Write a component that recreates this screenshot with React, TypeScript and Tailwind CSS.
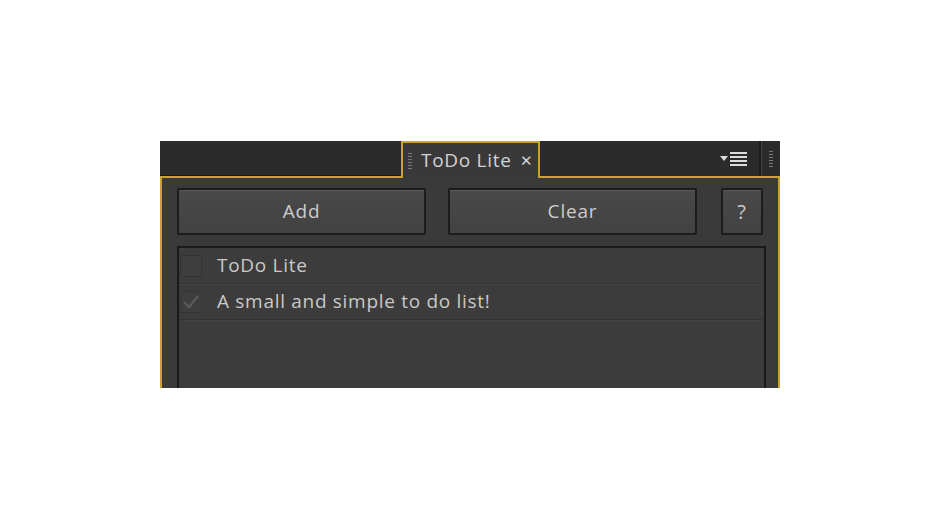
import React from "react";

const font = { fontFamily: '"Open Sans", "Noto Sans", sans-serif' };

function Grip({ className = "" }: { className?: string }) {
  return (
    <div className={`flex flex-col gap-[2px] ${className}`}>
      {Array.from({ length: 6 }).map((_, i) => (
        <div key={i} className="h-[1px] w-[4px] bg-[#7a7a7a]" />
      ))}
    </div>
  );
}

function Btn({ children, className = "" }: { children: React.ReactNode; className?: string }) {
  return (
    <div
      className={`h-[47px] flex items-center justify-center rounded-[2px] border-2 border-[#1c1c1c] bg-gradient-to-b from-[#4a4a4a] to-[#414141] shadow-[inset_0_1px_0_#5a5a5a] text-[19px] tracking-[0.8px] text-[#cccccc] ${className}`}
    >
      {children}
    </div>
  );
}

export default function App() {
  return (
    <div className="min-h-[530px] w-[940px] bg-white pt-[141px] pl-[160px]" style={font}>
      <div className="w-[620px] h-[247px] flex flex-col">
        {/* tab bar */}
        <div className="h-[37px] flex">
          <div className="w-[241px] bg-[#2b2b2b] border-b-2 border-[#c9a233] shadow-[inset_0_-1px_0_#1a1a1a]" />
          <div className="w-[139px] bg-[#393939] border-2 border-b-0 border-[#c9a233] flex items-center pl-[5px]">
            <Grip />
            <span className="ml-[9px] text-[19px] tracking-[0.7px] text-[#d2d2d2] leading-none">ToDo Lite</span>
            <span className="ml-[8px] text-[15px] text-[#d2d2d2] leading-none">✕</span>
          </div>
          <div className="flex-1 bg-[#2b2b2b] border-b-2 border-[#c9a233] flex items-center justify-end">
            <div className="flex items-center mr-[12px]">
              <svg width="8" height="6" viewBox="0 0 8 6" className="mr-[2px]">
                <path d="M0 0 L8 0 L4 5 Z" fill="#dcdcdc" />
              </svg>
              <div className="flex flex-col gap-[2px]">
                <div className="h-[2px] w-[17px] bg-[#dcdcdc]" />
                <div className="h-[2px] w-[17px] bg-[#dcdcdc]" />
                <div className="h-[2px] w-[17px] bg-[#dcdcdc]" />
                <div className="h-[2px] w-[17px] bg-[#dcdcdc]" />
              </div>
            </div>
            <div className="w-[2px] h-full bg-[#1a1a1a] shadow-[1px_0_0_#444]" />
            <div className="w-[19px] flex justify-center">
              <Grip />
            </div>
          </div>
        </div>
        {/* body */}
        <div className="flex-1 bg-[#3a3a3a] border-x-2 border-[#c9a233] pl-[15px] pr-[12px] pt-[10px] flex flex-col">
          <div className="flex">
            <Btn className="w-[249px]">Add</Btn>
            <Btn className="w-[249px] ml-[22px]">Clear</Btn>
            <Btn className="w-[42px] ml-[24px] text-[20px] text-[#c0c0c0]">?</Btn>
          </div>
          <div className="mt-[11px] flex-1 w-[589px] border-2 border-b-0 border-[#1a1a1a] bg-[#3c3c3c] text-[19px] tracking-[0.7px] text-[#c9c9c9]">
            <div className="h-[36px] flex items-center border-b border-[#333333] shadow-[0_1px_0_#424242]">
              <div className="ml-[1px] w-[22px] h-[22px] border border-[#333333] bg-[#3e3e3e]" />
              <span className="ml-[15px] leading-none">ToDo Lite</span>
            </div>
            <div className="h-[36px] flex items-center border-b border-[#333333] shadow-[0_1px_0_#424242]">
              <div className="ml-[1px] w-[22px] h-[22px] border border-[#363636] bg-[#3e3e3e] flex items-center justify-center">
                <svg width="18" height="16" viewBox="0 0 18 16">
                  <path d="M2 8 L7 13 L16 2" stroke="#5a5a5a" strokeWidth="2.2" fill="none" />
                </svg>
              </div>
              <span className="ml-[15px] leading-none">A small and simple to do list!</span>
            </div>
          </div>
        </div>
      </div>
    </div>
  );
}
